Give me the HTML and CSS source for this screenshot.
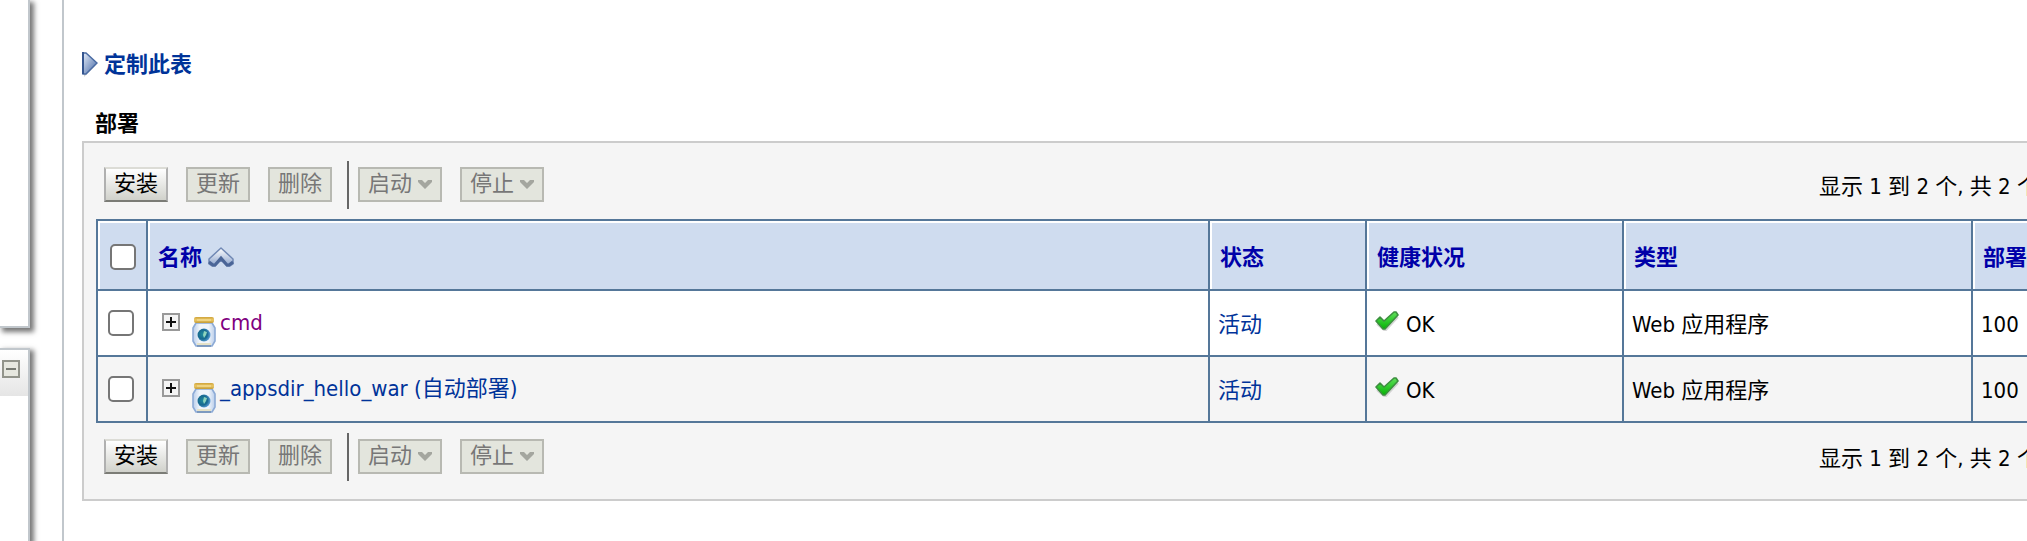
FILE: index.html
```html
<!DOCTYPE html>
<html lang="zh-CN">
<head>
    <meta charset="UTF-8">
    <meta name="viewport" content="width=device-width, initial-scale=1.0">
    <title>部署</title>
    <link rel="stylesheet" href="styles.css">
</head>
<body>
    <!-- icons -->
    <svg class="sprite" aria-hidden="true">
        <defs>
            <linearGradient id="blue-fill" x1="0" y1="0" x2="1" y2="1">
                <stop offset="0" stop-color="#e4ecf8"/>
                <stop offset="1" stop-color="#4467a5"/>
            </linearGradient>
            <linearGradient id="sort-fill" x1="0" y1="0" x2="0" y2="1">
                <stop offset="0" stop-color="#ffffff"/>
                <stop offset="1" stop-color="#8ba3cc"/>
            </linearGradient>
            <linearGradient id="gold" x1="0" y1="0" x2="0" y2="1">
                <stop offset="0" stop-color="#cfa43c"/>
                <stop offset="0.5" stop-color="#ecc967"/>
                <stop offset="1" stop-color="#c29a35"/>
            </linearGradient>
            <linearGradient id="glass" x1="0" y1="0" x2="1" y2="0">
                <stop offset="0" stop-color="#b9cdea"/>
                <stop offset="0.3" stop-color="#f0f5fb"/>
                <stop offset="0.7" stop-color="#f0f5fb"/>
                <stop offset="1" stop-color="#b9cdea"/>
            </linearGradient>
            <radialGradient id="globe" cx="0.4" cy="0.45" r="0.6">
                <stop offset="0" stop-color="#1f8a9c"/>
                <stop offset="0.6" stop-color="#17698f"/>
                <stop offset="1" stop-color="#5d9fd8"/>
            </radialGradient>
            <linearGradient id="green" x1="0" y1="0" x2="0" y2="1">
                <stop offset="0" stop-color="#5fe05a"/>
                <stop offset="1" stop-color="#04b404"/>
            </linearGradient>
        </defs>
        <symbol id="icon-plus" viewBox="0 0 18 18">
            <rect x="1" y="1" width="16" height="16" fill="#f4f4f4" stroke="#999" stroke-width="2"/>
            <path d="M4 9h10M9 4v10" stroke="#111" stroke-width="2"/>
        </symbol>
        <symbol id="icon-jar" viewBox="0 0 24 30">
            <path d="M4 6h16l3 5v13l-3 5H4l-3-5V11z" fill="url(#glass)" stroke="#8dabd6" stroke-width="1.6" stroke-linejoin="round"/>
            <path d="M5 27h14" stroke="#e5e2c8" stroke-width="2"/>
            <path d="M5 29h14" stroke="#6c8cb4" stroke-width="1.4"/>
            <rect x="2" y="0" width="20" height="6" rx="2" fill="url(#gold)"/>
            <path d="M5 3h14" stroke="#f4dc92" stroke-width="1.4"/>
            <circle cx="12" cy="18" r="6.500" fill="url(#globe)"/>
            <path d="M12 14l3 1-1 3-2 3-1-3z" fill="#8ed3bd"/>
        </symbol>
        <symbol id="icon-ok" viewBox="0 0 24 20">
            <path d="M2 13l7 6 2 0L23 6" fill="none" stroke="#bbb" stroke-width="2" opacity="0.6"/>
            <path d="M1 10l4-4 4 4L19 1h2l2 3L10 18H8z" fill="url(#green)" stroke="#3d8f3f" stroke-width="1.6" stroke-linejoin="round"/>
        </symbol>
        <symbol id="icon-down" viewBox="0 0 14 9">
            <path d="M0 0h4l3 3 3-3h4v2L7 9 0 2z" fill="#a4a69f"/>
        </symbol>
    </svg>

    <div class="page">
        <aside class="sidebar">
            <section class="portlet portlet-help"></section>
            <section class="portlet portlet-more">
                <header class="portlet-header">
                    <button type="button" class="portlet-toggle" aria-label="收起">
                        <svg width="10" height="2" viewBox="0 0 10 2"><path d="M0 1h10" stroke="#777a72" stroke-width="2"/></svg>
                    </button>
                </header>
            </section>
        </aside>

        <main class="content">
            <a href="#" class="customize">
                <svg width="16" height="26" viewBox="0 0 16 26">
                    <path d="M2 25l12-12-12 8z" fill="#bbb" opacity="0.7"/>
                    <path d="M1 1h3l11 10L4 22H1z" fill="url(#blue-fill)" stroke="#4a6ba3" stroke-width="1.500"/>
                    <path d="M1 0v22" stroke="#34558f" stroke-width="2"/>
                </svg>
                <span>定制此表</span>
            </a>

            <h1 class="title">部署</h1>

            <div class="panel">
                <div class="toolbar">
                    <button type="button" class="btn">安装</button>
                    <button type="button" class="btn" disabled>更新</button>
                    <button type="button" class="btn" disabled>删除</button>
                    <span class="separator"></span>
                    <button type="button" class="btn" disabled>启动<svg width="14" height="9"><use href="#icon-down"/></svg></button>
                    <button type="button" class="btn" disabled>停止<svg width="14" height="9"><use href="#icon-down"/></svg></button>
                    <p class="paging">显示 1 到 2 个, 共 2 个</p>
                </div>

                <table class="grid">
                    <thead>
                        <tr>
                            <th class="col-check"><input type="checkbox" aria-label="全选"></th>
                            <th class="col-name">
                                <a href="#" class="sort">名称
                                    <svg width="26" height="22" viewBox="0 0 26 22">
                                        <path d="M13 1L25 12v5l-3 2h-3l-6-6-6 6H4l-3-2v-5z" fill="url(#sort-fill)" stroke="#7088b4" stroke-width="1.500" stroke-linejoin="round"/>
                                        <path d="M1 15l4 3h2l6-7 6 7h2l4-3" fill="none" stroke="#4a6597" stroke-width="3"/>
                                    </svg>
                                </a>
                            </th>
                            <th class="col-status">状态</th>
                            <th class="col-health">健康状况</th>
                            <th class="col-type">类型</th>
                            <th class="col-order">部署顺序</th>
                        </tr>
                    </thead>
                    <tbody>
                        <tr>
                            <td class="col-check"><input type="checkbox" aria-label="cmd"></td>
                            <td class="col-name">
                                <div class="app">
                                    <svg class="plus" width="18" height="18"><use href="#icon-plus"/></svg>
                                    <svg class="jar" width="24" height="30"><use href="#icon-jar"/></svg>
                                    <a href="#" class="visited">cmd</a>
                                </div>
                            </td>
                            <td><a href="#">活动</a></td>
                            <td>
                                <div class="health">
                                    <svg width="24" height="20"><use href="#icon-ok"/></svg>
                                    <span>OK</span>
                                </div>
                            </td>
                            <td>Web 应用程序</td>
                            <td>100</td>
                        </tr>
                        <tr>
                            <td class="col-check"><input type="checkbox" aria-label="_appsdir_hello_war"></td>
                            <td class="col-name">
                                <div class="app">
                                    <svg class="plus" width="18" height="18"><use href="#icon-plus"/></svg>
                                    <svg class="jar" width="24" height="30"><use href="#icon-jar"/></svg>
                                    <a href="#">_appsdir_hello_war (自动部署)</a>
                                </div>
                            </td>
                            <td><a href="#">活动</a></td>
                            <td>
                                <div class="health">
                                    <svg width="24" height="20"><use href="#icon-ok"/></svg>
                                    <span>OK</span>
                                </div>
                            </td>
                            <td>Web 应用程序</td>
                            <td>100</td>
                        </tr>
                    </tbody>
                </table>

                <div class="toolbar toolbar-bottom">
                    <button type="button" class="btn">安装</button>
                    <button type="button" class="btn" disabled>更新</button>
                    <button type="button" class="btn" disabled>删除</button>
                    <span class="separator"></span>
                    <button type="button" class="btn" disabled>启动<svg width="14" height="9"><use href="#icon-down"/></svg></button>
                    <button type="button" class="btn" disabled>停止<svg width="14" height="9"><use href="#icon-down"/></svg></button>
                    <p class="paging">显示 1 到 2 个, 共 2 个</p>
                </div>
            </div>
        </main>
    </div>
</body>
</html>
```
FILE: styles.css
```css
:root {
    --link-color: #039;
    --visited-color: #800080;
    --head-text: #0000a8;
    --grid-line: #557799;
    --panel-line: #cccccc;
    --frame-line: #c1c7cc;
    --panel-background: #f5f5f5;
}
* {
    box-sizing: border-box;
}
body {
    margin: 0;
    font-family: Tahoma, 'DejaVu Sans Condensed', 'Noto Sans CJK SC', sans-serif;
    font-size: 22px;
    line-height: 30px;
    color: #000;
    background-color: white;
}
a {
    color: var(--link-color);
    text-decoration: none;
}
a:hover {
    text-decoration: underline;
}
.sprite {
    position: absolute;
    width: 0;
    height: 0;
}
.page {
    display: flex;
    min-height: 100vh;
}

/* sidebar */
.sidebar {
    display: flex;
    flex-direction: column;
    gap: 20px;
    width: 30px;
    flex-shrink: 0;
}
.portlet {
    border-right: 2px solid var(--frame-line);
    box-shadow: 3px 3px 5px 1px #777;
    background-color: white;
}
.portlet-help {
    height: 328px;
    border-bottom: 2px solid var(--frame-line);
}
.portlet-more {
    flex: 1;
    border-top: 2px solid var(--frame-line);
}
.portlet-header {
    display: flex;
    padding: 10px 2px 18px;
    background: linear-gradient(#fff, #e5e5e5);
}
.portlet-toggle {
    display: flex;
    align-items: center;
    justify-content: center;
    width: 18px;
    height: 18px;
    padding: 0;
    border: 2px solid #92948b;
    background-color: #e6e7df;
}

/* content */
.content {
    flex: 1;
    min-width: 0;
    margin-left: 32px;
    padding: 50px 0 40px 18px;
    border-left: 2px solid var(--frame-line);
    overflow: hidden;
}
.customize {
    display: flex;
    align-items: center;
    gap: 6px;
    font-weight: bold;
}
.title {
    margin: 29px 0 2px 13px;
    font-size: 22px;
    line-height: 30px;
}
.panel {
    margin-right: -80px;
    padding: 18px 12px;
    border: 2px solid var(--panel-line);
    background-color: var(--panel-background);
}

/* toolbar */
.toolbar {
    display: flex;
    align-items: center;
    gap: 18px;
    padding: 0 54px 0 8px;
    margin-bottom: 10px;
}
.toolbar-bottom {
    margin: 10px 0 0;
}
.btn {
    display: flex;
    align-items: center;
    gap: 6px;
    height: 35px;
    margin-bottom: 2px;
    padding: 0 8px;
    border: 2px solid;
    border-color: #dcdcd6 #b0b0b0 #7b7c76 #b0b0b0;
    font: inherit;
    color: #000;
    background: linear-gradient(#fff, #d0d1cb);
    white-space: nowrap;
}
.btn:disabled {
    border-color: #b8b9b2;
    color: #777;
    background: #e3e5dd;
}
.separator {
    width: 2px;
    height: 48px;
    margin: 0 -9px 0 -3px;
    background-color: #666;
}
.paging {
    margin: 0 0 0 auto;
    padding-top: 4px;
    white-space: nowrap;
}

/* table */
.grid {
    width: 100%;
    table-layout: fixed;
    border-collapse: collapse;
    background-color: white;
}
.grid th,
.grid td {
    height: 66px;
    padding: 4px 8px 0;
    border: 2px solid var(--grid-line);
    text-align: left;
    white-space: nowrap;
}
.grid th {
    height: 70px;
    padding: 6px 10px 0;
    color: var(--head-text);
    background-color: #cfdcef;
    box-shadow: inset 2px 2px #fff;
}
.grid tbody tr:nth-child(even) {
    background-color: var(--panel-background);
}
.grid .col-check {
    width: 50px;
    padding: 0 10px;
}
.grid th.col-check {
    padding: 4px 10px 0 12px;
}
.grid td.col-name {
    padding-top: 0;
}
.col-status {
    width: 157px;
}
.col-health {
    width: 257px;
}
.col-type {
    width: 349px;
}
.col-order {
    width: 120px;
}
.sort {
    display: flex;
    align-items: center;
    gap: 6px;
    color: var(--head-text);
}
input[type="checkbox"] {
    display: block;
    appearance: none;
    width: 26px;
    height: 26px;
    margin: 0;
    border: 2px solid #767676;
    border-radius: 5px;
    background-color: white;
}
input[type="checkbox"]:checked {
    background-color: #0075ff;
}
.app {
    display: flex;
    align-items: center;
    height: 30px;
    padding-left: 6px;
}
.plus {
    margin-bottom: 2px;
}
.jar {
    margin: 18px 4px 0 12px;
}
.visited {
    color: var(--visited-color);
}
.health {
    display: flex;
    align-items: center;
    gap: 7px;
}
.health svg {
    margin-bottom: 8px;
}
```
